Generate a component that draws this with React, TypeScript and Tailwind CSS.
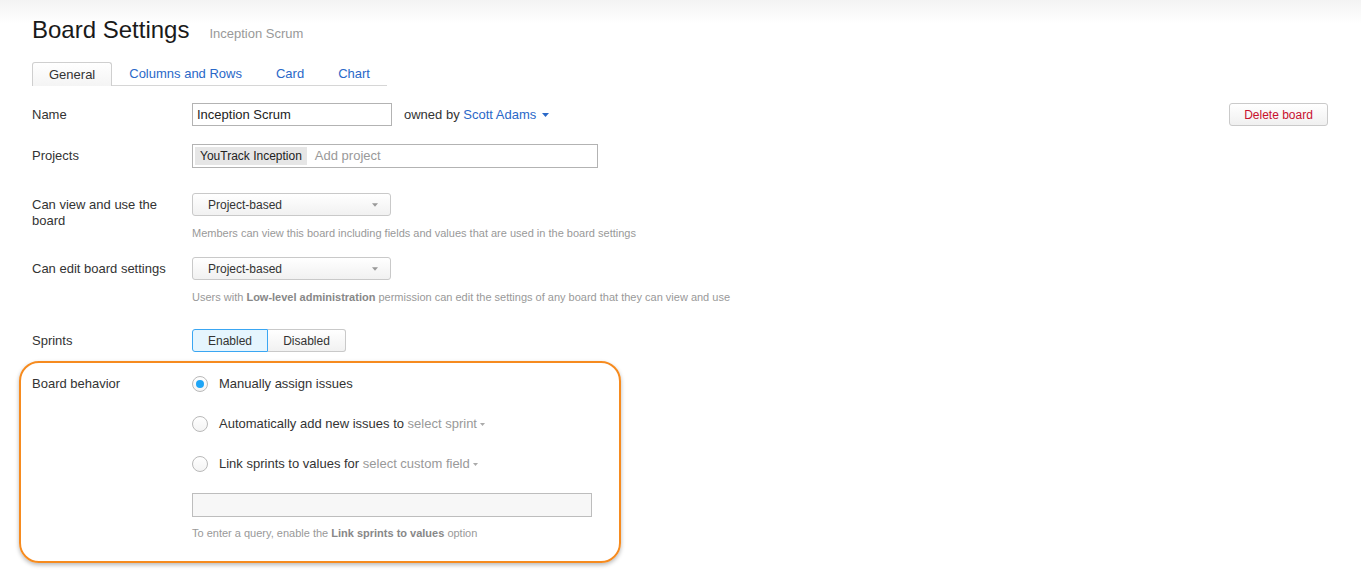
import React from "react";

const Caret = ({ color, w = 7, h = 4 }: { color: string; w?: number; h?: number }) => (
  <svg width={w} height={h} viewBox="0 0 7 4" className="inline-block">
    <path d="M0 0 L7 0 L3.5 4 Z" fill={color} />
  </svg>
);

const Select = ({ value }: { value: string }) => (
  <div className="flex h-[23px] w-[199px] items-center justify-between rounded-[3px] border border-[#c9c9c9] bg-[linear-gradient(to_bottom,#ffffff,#f1f1f1)] pl-[15px] pr-[12px] text-[12px] text-[#333]">
    <span>{value}</span>
    <Caret color="#999" w={6} h={4} />
  </div>
);

const Radio = ({ checked }: { checked?: boolean }) => (
  <span className="flex h-[16px] w-[16px] shrink-0 items-center justify-center rounded-full border border-[#b9b9b9] bg-[linear-gradient(to_bottom,#ffffff,#f4f4f4)]">
    {checked && <span className="h-[8px] w-[8px] rounded-full bg-[#1ea5f6]" />}
  </span>
);

export default function App() {
  return (
    <div
      className="min-h-[578px] w-full bg-white bg-[linear-gradient(to_bottom,#f3f3f3_0px,#ffffff_24px)] pl-[32px] pr-[33px] pt-[15px] text-[#333]"
      style={{ fontFamily: '"Liberation Sans", Arial, sans-serif' }}
    >
      {/* Header */}
      <div className="flex h-[30px] items-baseline">
        <h1 className="text-[24px] font-normal leading-[30px] text-[#1a1a1a]">Board Settings</h1>
        <span className="ml-[20px] text-[13px] text-[#999]">Inception Scrum</span>
      </div>

      {/* Tabs */}
      <div className="mt-[17px] flex">
        <div className="flex border-b border-[#d6d6d6]">
          <div className="-mb-px flex h-[24px] items-center rounded-t-[3px] border border-b-0 border-[#cfcfcf] bg-[linear-gradient(to_bottom,#ffffff,#f4f4f4)] px-[16px] text-[13px] text-[#333]">
            General
          </div>
          <div className="flex h-[23px] items-center px-[17px] text-[13px] text-[#2a68c8]">Columns and Rows</div>
          <div className="flex h-[23px] items-center px-[17px] text-[13px] text-[#2a68c8]">Card</div>
          <div className="flex h-[23px] items-center px-[17px] text-[13px] text-[#2a68c8]">Chart</div>
        </div>
      </div>

      {/* Name */}
      <div className="mt-[17px] flex items-center">
        <div className="w-[160px] text-[13px]">Name</div>
        <div className="flex h-[23px] w-[200px] items-center border border-[#b3b3b3] bg-white pl-[4px] text-[13px] text-[#222]">
          Inception Scrum
        </div>
        <div className="ml-[12px] flex items-center gap-[6px] text-[13px]">
          <span>
            owned by <span className="text-[#2a68c8]">Scott Adams</span>
          </span>
          <Caret color="#2a68c8" />
        </div>
        <button className="ml-auto flex h-[23px] w-[99px] items-center justify-center rounded-[3px] border border-[#cacaca] bg-[linear-gradient(to_bottom,#ffffff,#f0f0f0)] text-[12px] text-[#c8102e]">
          Delete board
        </button>
      </div>

      {/* Projects */}
      <div className="mt-[18px] flex items-center">
        <div className="w-[160px] text-[13px]">Projects</div>
        <div className="flex h-[24px] w-[406px] items-center border border-[#b3b3b3] bg-white pl-[2px]">
          <span className="flex h-[18px] items-center bg-[#e6e6e6] px-[5px] text-[12px] text-[#222]">YouTrack Inception</span>
          <span className="ml-[8px] text-[13px] text-[#999]">Add project</span>
        </div>
      </div>

      {/* Can view */}
      <div className="mt-[25px] flex items-start">
        <div className="w-[160px] pr-[10px] pt-[4px] text-[13px] leading-[16px]">Can view and use the board</div>
        <div className="flex flex-col">
          <Select value="Project-based" />
          <div className="mt-[10px] text-[11px] leading-[14px] text-[#999]">
            Members can view this board including fields and values that are used in the board settings
          </div>
        </div>
      </div>

      {/* Can edit */}
      <div className="mt-[17px] flex items-start">
        <div className="w-[160px] pr-[10px] pt-[4px] text-[13px] leading-[16px]">Can edit board settings</div>
        <div className="flex flex-col">
          <Select value="Project-based" />
          <div className="mt-[10px] text-[11px] leading-[14px] text-[#999]">
            Users with <b className="font-bold text-[#888]">Low-level administration</b> permission can edit the settings of any board that they can view and use
          </div>
        </div>
      </div>

      {/* Sprints */}
      <div className="mt-[25px] flex items-center">
        <div className="w-[160px] text-[13px]">Sprints</div>
        <div className="flex h-[23px]">
          <div className="flex w-[76px] items-center justify-center rounded-l-[3px] border border-[#3aa6f2] bg-[#e5f5fe] text-[12px] text-[#333]">
            Enabled
          </div>
          <div className="flex w-[78px] items-center justify-center rounded-r-[3px] border border-l-0 border-[#c9c9c9] bg-[linear-gradient(to_bottom,#ffffff,#f1f1f1)] text-[12px] text-[#333]">
            Disabled
          </div>
        </div>
      </div>

      {/* Board behavior box */}
      <div className="-ml-[13px] mt-[9px] w-[602px] rounded-[20px] border-2 border-[#f68b1f] px-[11px] pb-[21px] pt-[13px] shadow-[0_2px_4px_rgba(0,0,0,0.28)]">
        <div className="flex items-start">
          <div className="w-[160px] text-[13px] leading-[16px]">Board behavior</div>
          <div className="flex flex-col">
            <div className="flex h-[16px] items-center gap-[11px] text-[13px]">
              <Radio checked />
              <span>Manually assign issues</span>
            </div>
            <div className="mt-[24px] flex h-[16px] items-center gap-[11px] text-[13px]">
              <Radio />
              <span className="flex items-center">
                Automatically add new issues to&nbsp;<span className="text-[#999]">select sprint</span>
                <span className="ml-[3px] flex items-center"><Caret color="#aaa" w={5} h={3} /></span>
              </span>
            </div>
            <div className="mt-[24px] flex h-[16px] items-center gap-[11px] text-[13px]">
              <Radio />
              <span className="flex items-center">
                Link sprints to values for&nbsp;<span className="text-[#999]">select custom field</span>
                <span className="ml-[3px] flex items-center"><Caret color="#aaa" w={5} h={3} /></span>
              </span>
            </div>
            <div className="mt-[21px] h-[24px] w-[400px] border border-[#bdbdbd] bg-[#f7f7f7]" />
            <div className="mt-[9px] text-[11px] leading-[14px] text-[#999]">
              To enter a query, enable the <b className="font-bold text-[#888]">Link sprints to values</b> option
            </div>
          </div>
        </div>
      </div>
    </div>
  );
}
